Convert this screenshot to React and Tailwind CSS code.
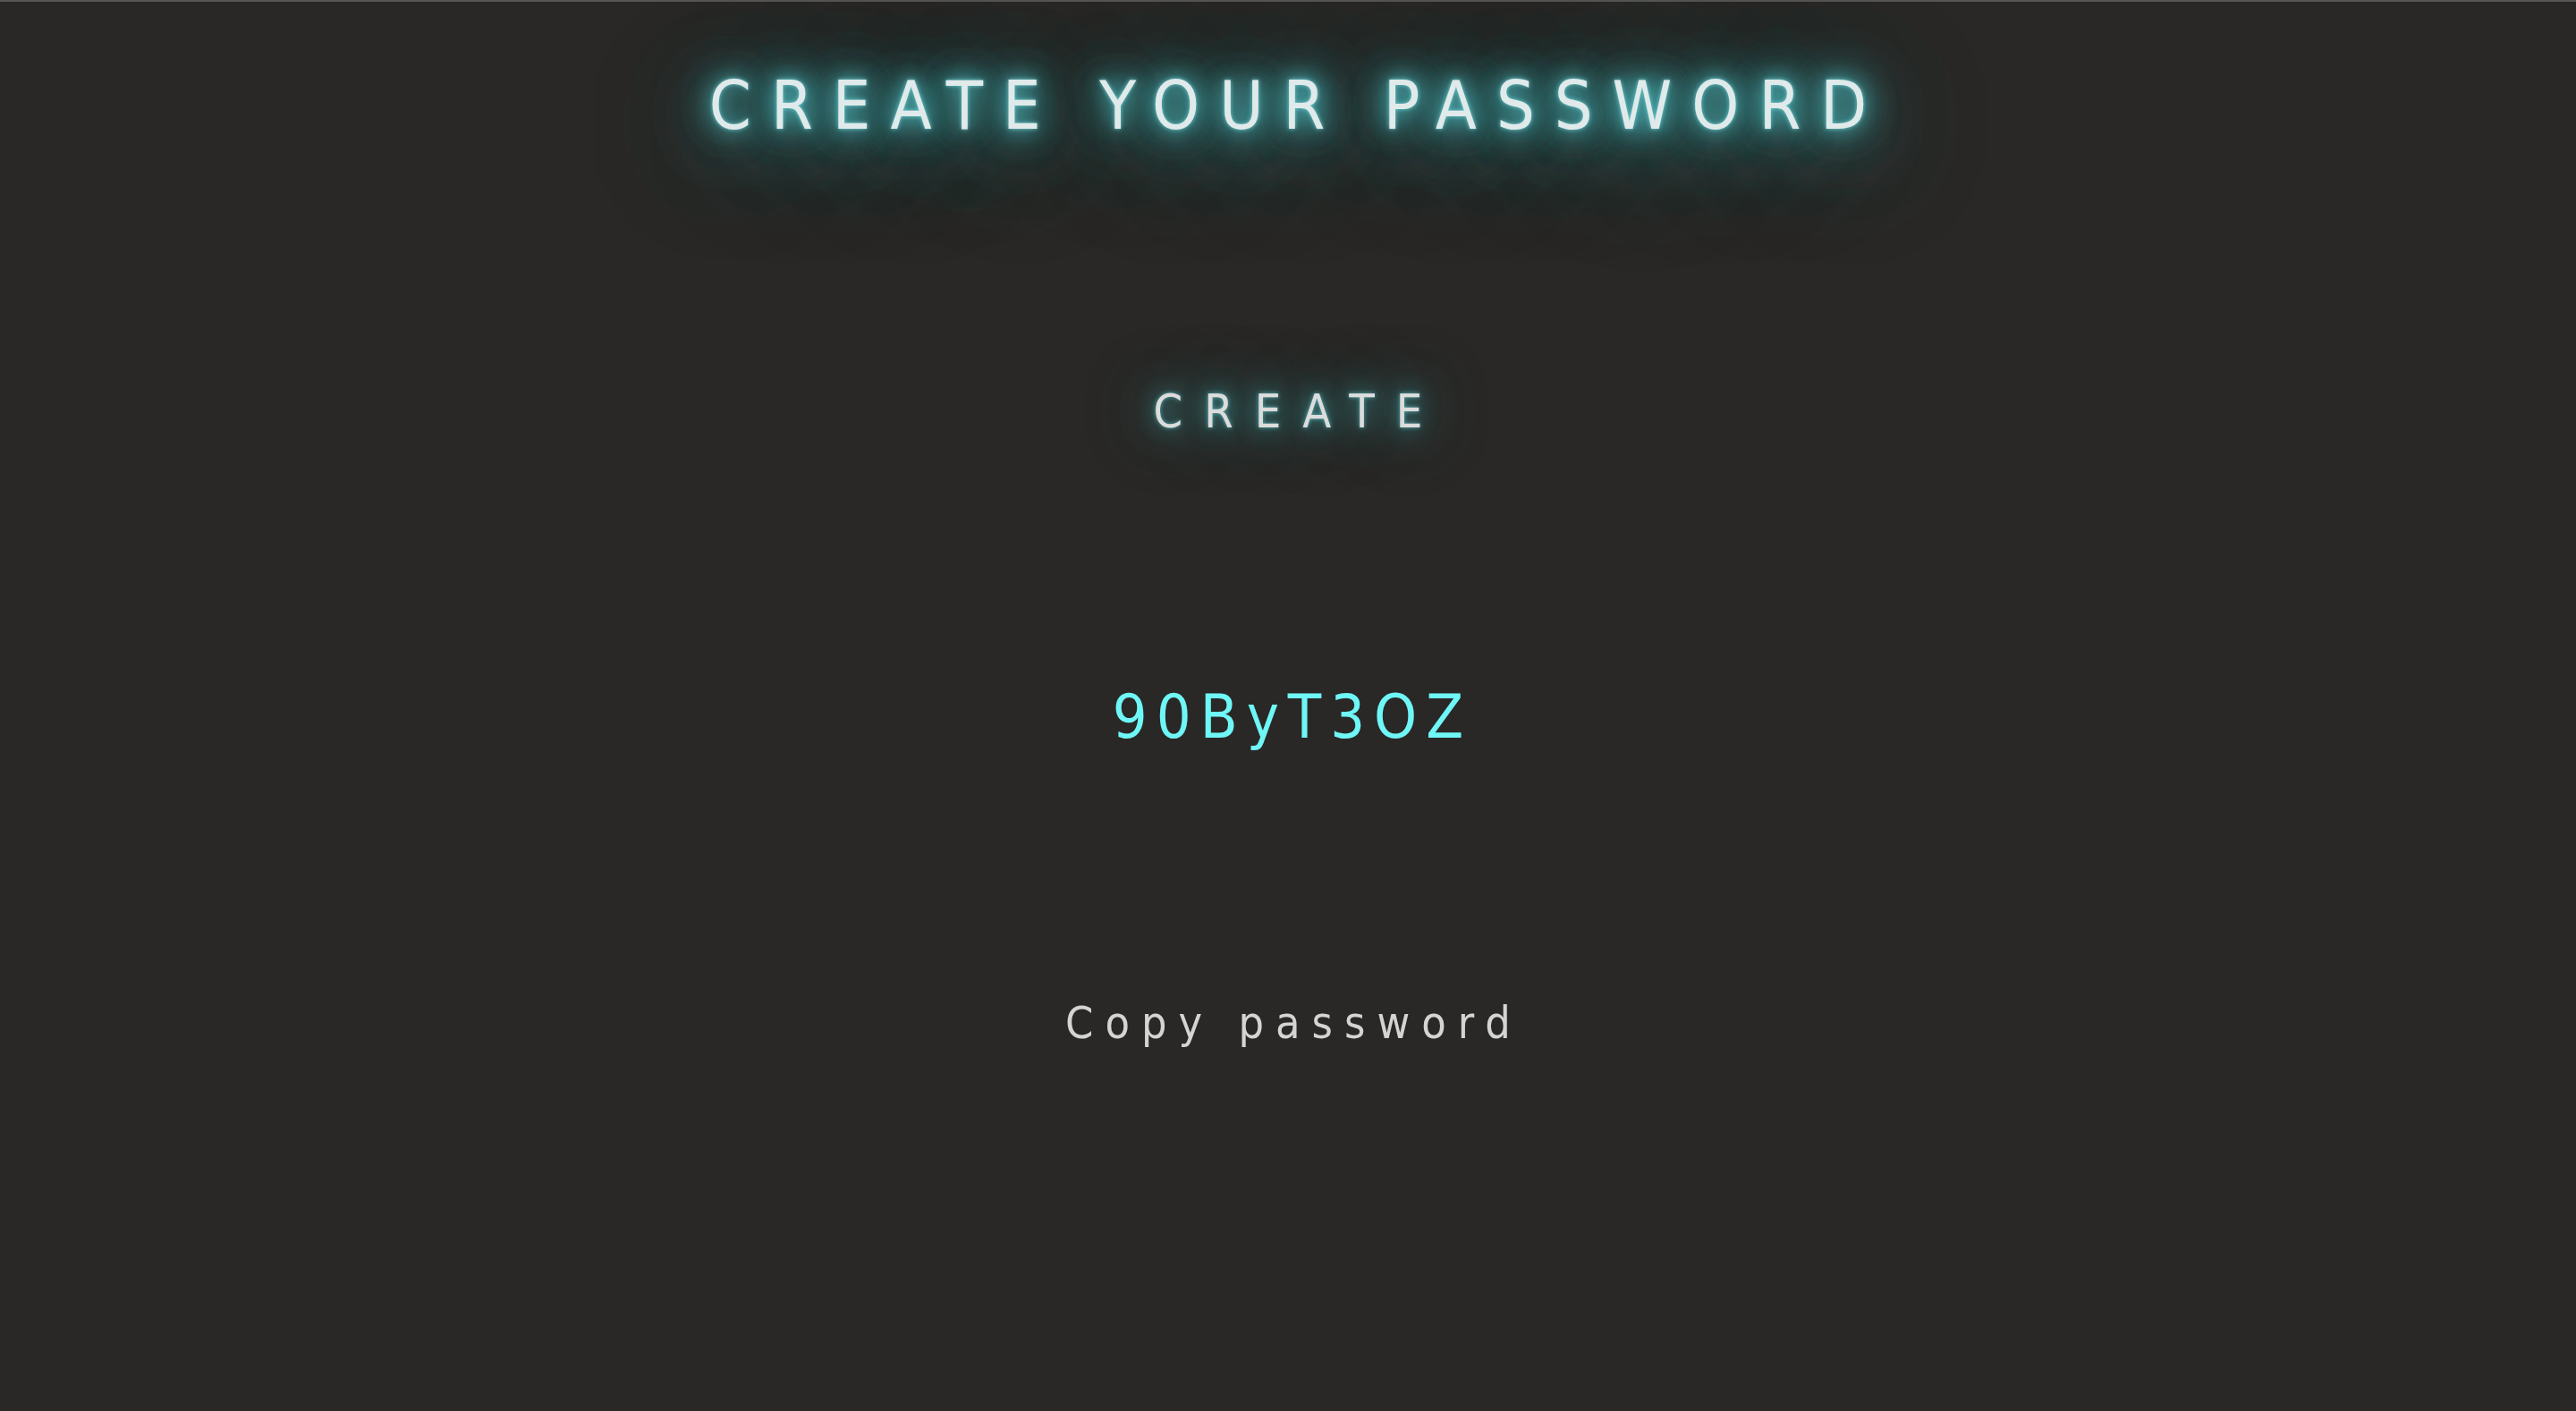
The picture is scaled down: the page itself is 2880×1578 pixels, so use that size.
import React, { useState } from "react";

const chars = "ABCDEFGHIJKLMNOPQRSTUVWXYZabcdefghijklmnopqrstuvwxyz0123456789";

const makePassword = () => {
  let out = "";
  for (let i = 0; i < 8; i++) {
    out += chars[Math.floor(Math.random() * chars.length)];
  }
  return out;
};

const App = () => {
  const [password, setPassword] = useState("90ByT3OZ");

  const handleCreate = () => {
    setPassword(makePassword());
  };

  const handleCopy = () => {
    navigator.clipboard?.writeText(password);
  };

  return (
    <div
      className="min-h-screen bg-[#292826] border-t-2 border-[#555555] flex flex-col items-center"
      style={{ fontFamily: '"DejaVu Sans Condensed", "Liberation Sans Narrow", "Liberation Sans", sans-serif' }}
    >
      {/* Title */}
      <h1 className="mt-[79px] text-[75px] leading-none font-normal tracking-[22px] pl-[22px] text-[#e0eaea] [text-shadow:0_0_5px_rgba(120,220,225,0.9),0_0_20px_rgba(80,190,195,0.9),0_0_40px_rgba(70,175,180,0.9),0_0_40px_rgba(70,175,180,0.9),0_10px_90px_rgba(60,160,165,0.9),0_10px_90px_rgba(60,160,165,0.9),0_20px_140px_rgba(60,150,155,0.8)]">
        CREATE YOUR PASSWORD
      </h1>

      {/* Create button */}
      <button
        className="mt-[278px] text-[52px] leading-none tracking-[24px] pl-[24px] text-[#dcdcdc] cursor-pointer [text-shadow:0_0_5px_rgba(100,200,205,0.8),0_0_25px_rgba(70,170,175,0.9),0_0_50px_rgba(60,160,165,0.9),0_0_80px_rgba(60,150,155,0.8)]"
        onClick={handleCreate}
      >
        CREATE
      </button>

      {/* Password output */}
      <p className="mt-[282px] text-[68px] leading-none tracking-[10px] pl-[10px] text-[#6ff6f6]">
        {password}
      </p>

      {/* Copy */}
      <button
        className="mt-[283px] text-[50px] leading-none tracking-[13px] pl-[13px] text-[#d4d4d4] cursor-pointer"
        onClick={handleCopy}
      >
        Copy password
      </button>
    </div>
  );
};

export default App;
